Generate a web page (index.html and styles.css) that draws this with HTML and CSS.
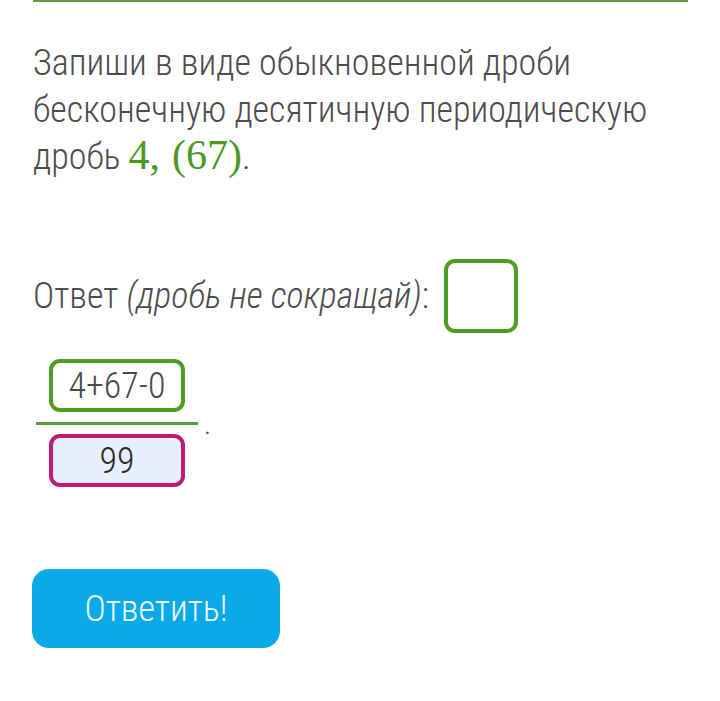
FILE: index.html
```html
<!DOCTYPE html>
<html lang="ru">
<head>
<meta charset="utf-8">
<link rel="stylesheet" href="styles.css">
</head>
<body>
<div class="card">
  <p class="task">Запиши в виде обыкновенной дроби бесконечную десятичную периодическую дробь <span class="math">4,&#8202;&#8201;(67)</span>.</p>
  <div class="answer-row">
    <span class="answer-label">Ответ <i>(дробь не сокращай)</i>:</span>
    <span class="box whole"></span>
  </div>
  <div class="fraction-row">
    <div class="fraction">
      <div class="box num">4+67-0</div>
      <div class="bar"></div>
      <div class="box den">99</div>
    </div>
    <span class="dot">.</span>
  </div>
  <button class="submit">Ответить!</button>
</div>
</body>
</html>
```
FILE: styles.css
```css
html, body {
  margin: 0;
  padding: 0;
  background: #ffffff;
}
body {
  font-family: "Roboto Condensed Light", "Roboto Condensed", Roboto, "Noto Sans", sans-serif;
  font-stretch: condensed;
  font-weight: 300;
  color: #4d4d4d;
}
.card {
  margin-left: 33px;
  width: 655px;
  border-top: 2px solid #5b9a3e;
}
.task {
  margin: 38px 0 0 0;
  font-size: 36px;
  line-height: 47px;
  width: 650px;
}
.math {
  font-family: "Liberation Serif", "DejaVu Serif", serif;
  font-stretch: normal;
  font-weight: 400;
  color: #4a9a22;
  font-size: 42px;
  line-height: 40px;
}
.answer-row {
  display: flex;
  align-items: center;
  margin-top: 78px;
  font-size: 36px;
  gap: 15px;
}
.answer-row i {
  font-style: italic;
}
.box {
  box-sizing: border-box;
  border-radius: 11px;
  border: 4px solid #4e9e24;
  display: flex;
  align-items: center;
  justify-content: center;
  font-size: 36px;
}
.whole {
  width: 74px;
  height: 74px;
}
.fraction-row {
  display: flex;
  align-items: center;
  margin-top: 26px;
  margin-left: 3px;
}
.fraction {
  display: flex;
  flex-direction: column;
  align-items: center;
  width: 162px;
}
.num {
  width: 136px;
  height: 53px;
  color: #4a4a4a;
}
.bar {
  width: 162px;
  height: 3px;
  background: #5b9a3e;
  margin: 10px 0 9px 0;
}
.den {
  width: 136px;
  height: 53px;
  border-color: #bf1a78;
  background: #e8effc;
  color: #2a2a2a;
}
.dot {
  font-size: 30px;
  margin-left: 6px;
  margin-top: 0px;
}
.submit {
  display: block;
  margin-top: 82px;
  margin-left: -1px;
  width: 248px;
  height: 79px;
  border: none;
  border-radius: 17px;
  background: #0aa9ea;
  color: #eef8fe;
  font-family: "Roboto Condensed Light", "Roboto Condensed", Roboto, "Noto Sans", sans-serif;
  font-stretch: condensed;
  font-weight: 300;
  font-size: 36px;
  padding: 0;
}
```
